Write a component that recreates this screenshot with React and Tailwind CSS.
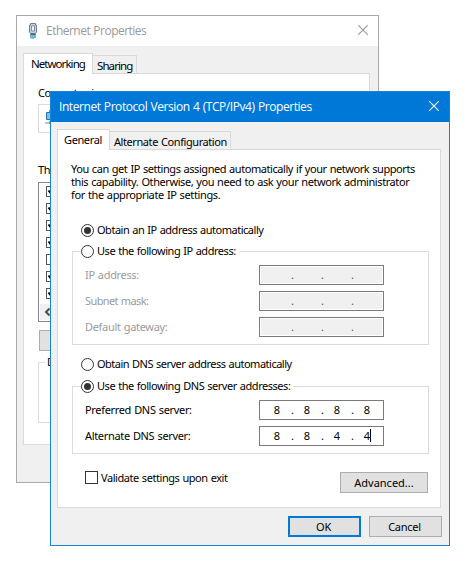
const BODY = "font-['Noto_Sans',sans-serif] text-[11px] leading-[13px] text-black [word-spacing:0.6px]";
const TITLE = "font-['Open_Sans',sans-serif] text-[12px] leading-[16px]";

function Close({ className }) {
  return (
    <svg className={`mr-[10px] mb-[2px] ml-auto h-[10px] w-[10px] ${className}`} viewBox="0 0 10 10" fill="none" stroke="currentColor" strokeWidth="1.1">
      <path d="M0.2 0.2 9.8 9.8M9.8 0.2 0.2 9.8" />
    </svg>
  );
}

function EthernetIcon() {
  return (
    <svg className="mr-[9px] ml-[11px] h-[16px] w-[10px] shrink-0" viewBox="0 0 10 16">
      <path d="M3 11v4.500M5 11v5M7 11v4" stroke="#2596be" strokeWidth="1.3" />
      <path d="M2.500 .5h5v1.500h1v7l-1 1.500h-5l-1-1.500v-7h1z" fill="#c3d3e4" stroke="#6f8093" />
      <path d="M3.500 2.800h3v5.200h-3z" fill="#eef4fa" stroke="#7c8fa5" />
      <path d="M2.500 11.300h5" stroke="#37617c" strokeWidth="1.2" />
    </svg>
  );
}

function Radio({ on }) {
  return (
    <span className="flex h-[13px] w-[13px] shrink-0 items-center justify-center rounded-full border border-[#333] bg-white">
      {on && <span className="h-[7px] w-[7px] rounded-full bg-[#333]" />}
    </span>
  );
}

function RadioRow({ on, children, className = '' }) {
  return (
    <div className={`flex h-[13px] items-start gap-[3px] whitespace-nowrap bg-white ${className}`}>
      <Radio on={on} />
      <span className="leading-[11px]">{children}</span>
    </div>
  );
}

function IpInput({ octets, disabled, caret }) {
  return (
    <div className="h-[20px] w-[125px] border border-[#7a7a7a] bg-white p-px">
      <div className={`flex h-full pt-px pl-[5px] ${disabled ? 'bg-[#f0f0f0]' : ''}`}>
        {[0, 1, 2, 3].map((i) => (
          <div key={i} className="flex">
            <span className="relative w-[22px] text-center">
              {octets ? octets[i] : ''}
              {caret && i === 3 && <span className="absolute top-0 left-[14px] h-[13px] w-px bg-black" />}
            </span>
            {i < 3 && <span className={`w-[8px] pl-px text-center ${disabled ? 'text-[#555]' : ''}`}>.</span>}
          </div>
        ))}
      </div>
    </div>
  );
}

function Field({ label, disabled, ...rest }) {
  return (
    <div className="flex h-[20px] items-start">
      <span className={`mt-[3px] w-[174px] whitespace-nowrap ${disabled ? 'text-[#9b9b9b]' : ''}`}>{label}</span>
      <IpInput disabled={disabled} {...rest} />
    </div>
  );
}

function Button({ children, className }) {
  return (
    <button className={`flex h-[21px] items-center justify-center bg-[#e1e1e1] ${className}`}>{children}</button>
  );
}

function Tab({ active, children, className }) {
  return (
    <div className={`shrink-0 whitespace-nowrap border-t border-r border-[#d9d9d9] ${active ? 'z-10 -mb-px h-[21px] border-l bg-white pt-[3px] pl-[6px]' : 'h-[18px] bg-[#f0f0f0] pt-[3px] pl-[4px]'} ${className}`}>
      {children}
    </div>
  );
}

function EthernetWindow() {
  const checks = [true, true, true, true, false, true, true];
  return (
    <section className={`absolute top-[15px] left-[16px] flex h-[468px] w-[363px] flex-col border border-[#aaa] bg-[#f0f0f0] ${BODY}`}>
      <header className={`flex h-[30px] shrink-0 items-center bg-white text-[#999] ${TITLE}`}>
        <EthernetIcon />
        <span className="-ml-px tracking-[-0.52px]">Ethernet Properties</span>
        <Close className="text-[#999]" />
      </header>
      <div className="flex h-[27px] shrink-0 items-end pl-[6px]">
        <Tab active className="w-[70px]"><span className="ml-px text-[11.5px] tracking-[-0.95px]">Networking</span></Tab>
        <Tab className="w-[44px]"><span className="text-[11.5px] tracking-[-0.9px]">Sharing</span></Tab>
      </div>
      <div className="ml-[6px] h-[372px] w-[347px] border border-[#d9d9d9] bg-white px-[14px] pt-[12px]">
        <div className="whitespace-nowrap tracking-[-0.5px]">Connect using:</div>
        <div className="mt-[5px] h-[29px] border border-[#d9d9d9] pt-[5px] pl-[6px]">
          <svg className="h-[16px] w-[16px]" viewBox="0 0 16 16">
            <path d="M4 0h8v3h-8z" fill="#4a9fd8" />
            <path d="M1.500 2.500h12v7h-12z" fill="#6cc5f5" stroke="#2d73a8" />
            <path d="M0 12h14v2h-14z" fill="#bfc9c4" />
            <path d="M4 11h4v3h-4z" fill="#5bb45b" />
          </svg>
        </div>
        <div className="mt-[30px] tracking-[-0.4px]">Th</div>
        <div className="mt-[6px] flex h-[140px] flex-col border border-[#828790] pt-[3px]">
          <div className="flex flex-col gap-[6px] pl-[7px]">
            {checks.map((on, i) => (
              <span key={i} className="h-[11px] w-[11px] border border-[#555]">
                {on && (
                  <svg className="h-[9px] w-[9px]" viewBox="0 0 9 9" fill="none" stroke="#000" strokeWidth="2">
                    <path d="M1.500 3.500 3.500 6 8 1.500" />
                  </svg>
                )}
              </span>
            ))}
          </div>
          <div className="mt-[5px] ml-px flex h-[16px] items-center bg-[#f0f0f0] pl-[5px]">
            <svg className="h-[8px] w-[5px]" viewBox="0 0 5 8" fill="none" stroke="#505050" strokeWidth="2">
              <path d="M4.500 .5 1 4l3.500 3.500" />
            </svg>
          </div>
        </div>
        <Button className="mt-[8px] ml-px w-[100px] border border-[#adadad]" />
        <div className="mt-[11px] h-[61px] border border-[#dcdcdc]">
          <span className="-mt-[8px] ml-[6px] block w-[12px] bg-white pl-[2px]">D</span>
        </div>
      </div>
    </section>
  );
}

function ProtocolWindow() {
  return (
    <section className={`absolute top-[91px] left-[50px] flex h-[455px] w-[400px] flex-col border border-[#1883d7] bg-[#f0f0f0] ${BODY}`}>
      <header className={`flex h-[30px] shrink-0 items-center bg-[#0078d7] pl-[8px] text-white ${TITLE}`}>
        <span className="whitespace-nowrap tracking-[-0.43px]">Internet Protocol Version 4 (TCP/IPv4) Properties</span>
        <Close className="text-white" />
      </header>
      <div className="flex h-[27px] shrink-0 items-end pl-[6px]">
        <Tab active className="w-[53px]"><span className="tracking-[-0.38px]">General</span></Tab>
        <Tab className="w-[121px]"><span className="tracking-[-0.42px]">Alternate Configuration</span></Tab>
      </div>
      <div className="ml-[6px] h-[359px] w-[384px] shrink-0 border border-[#d9d9d9] bg-white pt-[12px] pl-[14px]">
        <div className="-ml-px whitespace-nowrap">
          <div className="tracking-[-0.44px]">You can get IP settings assigned automatically if your network supports</div>
          <div className="tracking-[-0.42px]">this capability. Otherwise, you need to ask your network administrator</div>
          <div className="tracking-[-0.38px]">for the appropriate IP settings.</div>
        </div>

        <RadioRow on className="mt-[23px] ml-[9px] tracking-[-0.48px]">Obtain an IP address automatically</RadioRow>
        <div className="mt-[14px] h-[94px] w-[357px] border border-[#dcdcdc]">
          <RadioRow className="-mt-[7px] ml-[8px] w-[158px] tracking-[-0.46px]">Use the following IP address:</RadioRow>
          <div className="mt-[7px] flex flex-col gap-[6px] pl-[12px]">
            <Field disabled label={<span className="tracking-[-0.33px]">IP address:</span>} />
            <Field disabled label={<span className="tracking-[-0.6px]">Subnet mask:</span>} />
            <Field disabled label={<span className="tracking-[-0.32px]">Default gateway:</span>} />
          </div>
        </div>

        <RadioRow className="mt-[13px] ml-[9px] tracking-[-0.5px]">Obtain DNS server address automatically</RadioRow>
        <div className="mt-[15px] h-[68px] w-[357px] border border-[#dcdcdc]">
          <RadioRow on className="-mt-[7px] ml-[8px] w-[212px] tracking-[-0.46px]">Use the following DNS server addresses:</RadioRow>
          <div className="mt-[7px] flex flex-col gap-[6px] pl-[12px]">
            <Field octets={[8, 8, 8, 8]} label={<span className="tracking-[-0.33px]">Preferred DNS server:</span>} />
            <Field octets={[8, 8, 4, 4]} caret label={<span className="tracking-[-0.33px]">Alternate DNS server:</span>} />
          </div>
        </div>

        <div className="mt-[17px] mr-[12px] ml-[13px] flex items-start">
          <span className="h-[13px] w-[13px] shrink-0 border border-[#333] bg-white" />
          <span className="ml-[3px] whitespace-nowrap tracking-[-0.44px]">Validate settings upon exit</span>
          <Button className="mt-px ml-auto w-[88px] border border-[#adadad]">Advanced...</Button>
        </div>
      </div>
      <div className="mt-[8px] flex justify-end gap-[8px] pr-[7px]">
        <Button className="w-[73px] border-2 border-[#0078d7] pr-[2px] tracking-[-0.3px]">OK</Button>
        <Button className="w-[73px] border border-[#adadad] pr-[2px] tracking-[-0.25px]">Cancel</Button>
      </div>
    </section>
  );
}

export default function App() {
  return (
    <main className="relative h-[564px] w-[468px] overflow-hidden bg-white">
      <EthernetWindow />
      <ProtocolWindow />
    </main>
  );
}
